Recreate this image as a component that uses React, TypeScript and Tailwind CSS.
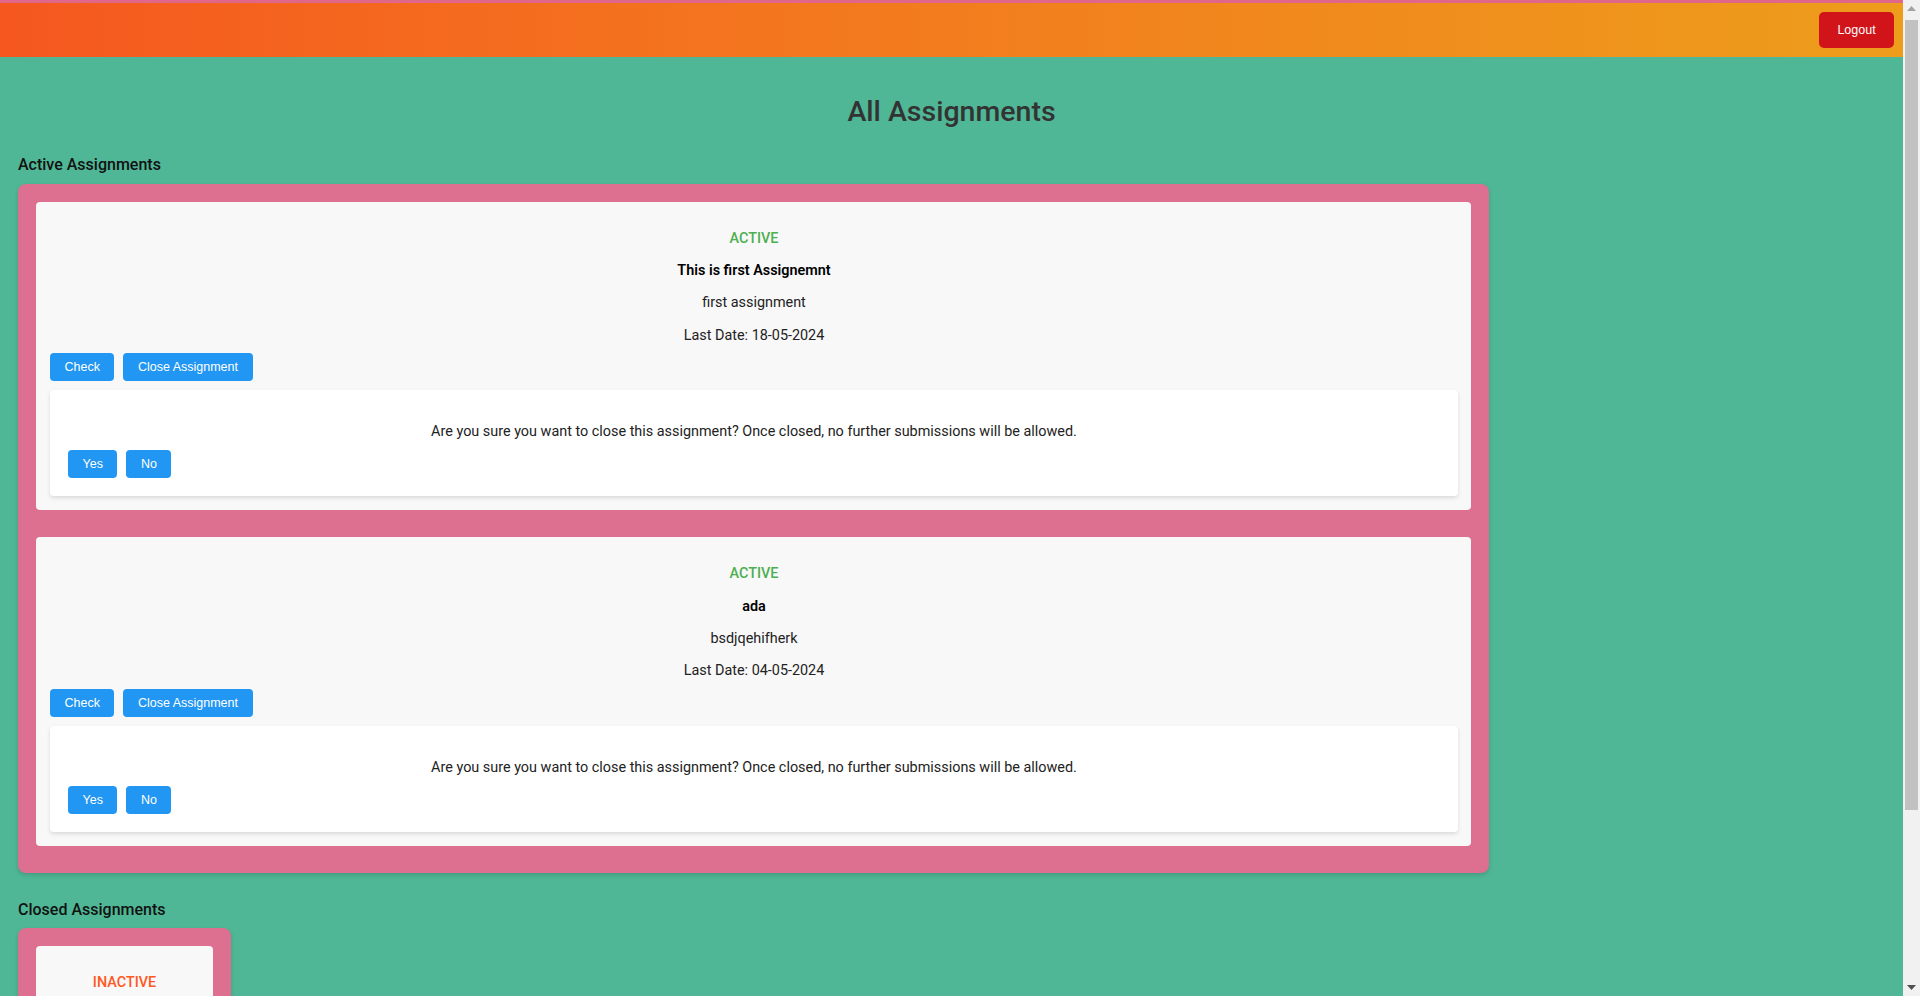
import React from "react"

type Assignment = {
  title: string
  description: string
  lastDate: string
  active: boolean
}

const assignments: Assignment[] = [
  { title: "This is first Assignemnt", description: "first assignment", lastDate: "18-05-2024", active: true },
  { title: "ada", description: "bsdjqehifherk", lastDate: "04-05-2024", active: true },
]

const closed: Assignment[] = [
  { title: "test assignment", description: "old work", lastDate: "01-04-2024", active: false },
]

function BlueButton({ children }: { children: React.ReactNode }) {
  return (
    <button
      type="button"
      className="h-[28px] px-[14.5px] rounded-[4px] bg-[#2196f3] text-white text-[12.5px] font-['Liberation_Sans',Arial,sans-serif] leading-none"
    >
      {children}
    </button>
  )
}

function CardText({ a }: { a: Assignment }) {
  return (
    <div className="mt-[14px] flex flex-col items-center gap-[14px] text-[14.4px] leading-[18.4px] text-[#222]">
      <p className={a.active ? "font-medium text-[#4caf50]" : "font-medium text-[#ff5722]"}>
        {a.active ? "ACTIVE" : "INACTIVE"}
      </p>
      <p className="font-semibold text-black">{a.title}</p>
      <p>{a.description}</p>
      <p>Last Date: {a.lastDate}</p>
    </div>
  )
}

function ActiveCard({ a }: { a: Assignment }) {
  return (
    <div className="rounded-[4px] bg-[#f8f8f8] p-[14px] pr-[13px]">
      <CardText a={a} />
      <div className="mt-[8px] flex gap-[9px]">
        <BlueButton>Check</BlueButton>
        <BlueButton>Close Assignment</BlueButton>
      </div>
      <div className="mt-[9px] rounded-[4px] bg-white px-[18px] pt-[33px] pb-[18px] shadow-[0_2px_4px_rgba(0,0,0,0.12)]">
        <p className="text-center text-[14.4px] leading-[18px] text-[#222]">
          Are you sure you want to close this assignment? Once closed, no further submissions will be allowed.
        </p>
        <div className="mt-[9px] flex gap-[9px]">
          <BlueButton>Yes</BlueButton>
          <BlueButton>No</BlueButton>
        </div>
      </div>
    </div>
  )
}

// the window's scrollbar, as it shows in the screenshot
function Scrollbar() {
  return (
    <div className="w-[17px] shrink-0 bg-[#f1f1f1] flex flex-col items-center">
      <div className="h-[17px] w-full flex items-center justify-center">
        <svg width="9" height="5" viewBox="0 0 9 5">
          <path d="M0 5 L4.5 0 L9 5 Z" fill="#a3a3a3" />
        </svg>
      </div>
      <div className="mt-[3px] h-[790px] w-[13px] bg-[#c1c1c1]" />
      <div className="flex-1" />
      <div className="h-[17px] w-full flex items-center justify-center">
        <svg width="9" height="5" viewBox="0 0 9 5">
          <path d="M0 0 L9 0 L4.5 5 Z" fill="#505050" />
        </svg>
      </div>
    </div>
  )
}

export default function App() {
  return (
    <div className="flex h-screen overflow-hidden">
      <div className="flex-1 min-w-0 overflow-hidden bg-[#4fb795] font-['Roboto',sans-serif]">
        <div className="h-[3px] bg-[#e0668a]" />
        <header className="h-[54px] flex items-center justify-end pr-[9px] bg-linear-to-r from-[#f5571f] to-[#ed9d1b]">
          <button
            type="button"
            className="h-[36px] w-[75px] rounded-[5px] bg-[#d0141a] text-white text-[12.5px] font-['Liberation_Sans',Arial,sans-serif]"
          >
            Logout
          </button>
        </header>

        <h1 className="mt-[38px] text-center text-[28.5px] leading-[34px] font-medium text-[#333]">All Assignments</h1>

        <section className="px-[18px]">
          <h2 className="mt-[26px] text-[16px] leading-[20px] font-medium text-[#111]">Active Assignments</h2>
          <div className="mt-[8.5px] w-[1471px] flex flex-col gap-[27px] rounded-[8px] bg-[#dd7090] px-[18px] pt-[18px] pb-[27px] shadow-[0_2px_4px_rgba(0,0,0,0.15)]">
            {assignments.map((a, i) => (
              <ActiveCard key={i} a={a} />
            ))}
          </div>

          <h2 className="mt-[27px] text-[16px] leading-[20px] font-medium text-[#111]">Closed Assignments</h2>
          <div className="mt-[8px] inline-block rounded-[8px] bg-[#dd7090] px-[18px] pt-[18px] pb-[27px] shadow-[0_2px_4px_rgba(0,0,0,0.15)]">
            {closed.map((a, i) => (
              <div key={i} className="w-[177px] rounded-[4px] bg-[#f8f8f8] p-[14px]">
                <CardText a={a} />
                <div className="mt-[8px] flex gap-[9px]">
                  <BlueButton>Check</BlueButton>
                </div>
              </div>
            ))}
          </div>
        </section>
      </div>
      <Scrollbar />
    </div>
  )
}
